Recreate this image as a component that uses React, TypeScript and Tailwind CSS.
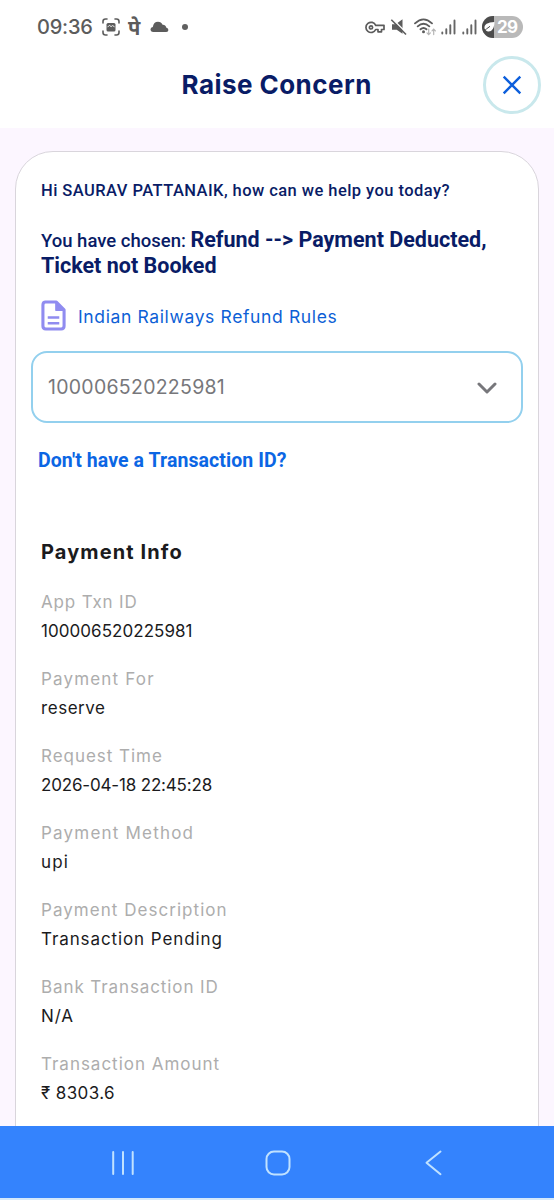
import React from 'react';

interface InfoRow {
  label: string;
  value: string;
  labelClass: string;
  valueClass: string;
}

const PAYMENT_INFO: InfoRow[] = [
  { label: 'App Txn ID', value: '100006520225981', labelClass: 'tracking-[0.84px]', valueClass: 'tracking-[0.05px]' },
  { label: 'Payment For', value: 'reserve', labelClass: 'tracking-[1.17px]', valueClass: 'tracking-[0.55px]' },
  { label: 'Request Time', value: '2026-04-18 22:45:28', labelClass: 'tracking-[0.97px]', valueClass: 'tracking-[-0.17px]' },
  { label: 'Payment Method', value: 'upi', labelClass: 'tracking-[1.2px]', valueClass: 'tracking-[1.2px]' },
  { label: 'Payment Description', value: 'Transaction Pending', labelClass: 'tracking-[1.04px]', valueClass: 'tracking-[0.9px]' },
  { label: 'Bank Transaction ID', value: 'N/A', labelClass: 'tracking-[0.9px]', valueClass: 'tracking-[0.9px]' },
  { label: 'Transaction Amount', value: '₹ 8303.6', labelClass: 'tracking-[0.98px]', valueClass: 'tracking-[0.4px]' },
];

function SignalIcon() {
  return (
    <svg width="15" height="16" viewBox="0 0 15 16" stroke="#666" strokeWidth="1.9" strokeLinecap="round">
      <path d="M1.300 13.500v1M5.300 10.300v4.200M9.300 6.300v8.200M13.500 1.500v13" />
    </svg>
  );
}

function StatusBar() {
  return (
    <div className="flex h-[54px] items-center justify-between pl-[37px] pr-[31px] text-[#5c5c5c]">
      <div className="flex items-center">
        <span className="w-[65px] text-[20px] font-medium leading-none tracking-[-0.2px]">09:36</span>
        <svg width="18" height="18" viewBox="0 0 18 18" fill="none" stroke="currentColor" strokeWidth="1.6" strokeLinecap="round">
          <path d="M1 5V3.5Q1 1 3.5 1H5M13 1h1.5Q17 1 17 3.5V5M17 13v1.500Q17 17 14.500 17H13M5 17H3.500Q1 17 1 14.500V13" />
          <rect x="4.500" y="5" width="9" height="8.500" rx="1.500" fill="currentColor" stroke="none" />
          <path d="M5.800 8.900l1.600-1.600 1.700 1.300 1.500-1 1.600 1" stroke="#fff" strokeWidth="0.9" />
        </svg>
        <span className="ml-[8px] mt-[5px] w-[14px] font-['Noto_Sans_Devanagari','Noto_Sans',sans-serif] text-[20px] font-bold leading-none">पे</span>
        <svg className="ml-2" width="19" height="12" viewBox="0 0 19 12" fill="currentColor">
          <path d="M3.200 11Q.5 10.800.5 8.300.6 6.300 2.800 6 3.600.7 8 .7q3.300 0 4.600 3 2.900-.2 3.600 2.800 2.200.5 2.200 2.500 0 2-2.200 2Z" />
        </svg>
        <span className="ml-[13px] size-[6px] rounded-full bg-[#606060]" />
      </div>
      <div className="flex items-center">
        <svg width="20" height="13" viewBox="0 0 20 13" fill="none" stroke="currentColor" strokeWidth="1.7" strokeLinejoin="round">
          <path d="M10.700 4.300A5.100 5.100 0 1 0 10.700 8.500H13v2.300h3.500V8.500H19V4.300Z" />
          <circle cx="6" cy="6.400" r="1.600" />
        </svg>
        <svg className="ml-[5px]" width="18" height="18" viewBox="0 0 18 18" fill="currentColor">
          <path d="M2 6.300h3.700L12.500 1.200v14.600L6.700 11.800H2Z" />
          <path d="M2.300.8 17 15.500" stroke="#fff" strokeWidth="1.500" />
          <path d="M1.300 1.800 16 16.500" stroke="currentColor" strokeWidth="1.600" />
        </svg>
        <svg className="ml-[6px]" width="23" height="18" viewBox="0 0 23 18" fill="none" stroke="currentColor" strokeWidth="1.800" strokeLinecap="round">
          <path d="M1 5.400Q9.500-2.600 18 5.400M3.700 8.400Q9.500 3 15.300 8.400M6.500 11.300Q9.500 8.700 12.500 11.300" />
          <circle cx="9.500" cy="13.700" r="1.500" fill="currentColor" stroke="none" />
          <path d="M14.700 11v5.500M13 14.900l1.700 1.700 1.700-1.700M19.700 16.600v-5.500M18 12.800l1.700-1.700 1.700 1.700" stroke="#b5b5b5" strokeWidth="1.200" />
        </svg>
        <div className="ml-[4px] flex gap-[6px]">
          <SignalIcon />
          <SignalIcon />
        </div>
        <div className="ml-[5px] flex h-[22px] w-[41px] items-center overflow-hidden rounded-full bg-[#b9b9b9]">
          <div className="flex h-full w-3 shrink-0 items-center bg-[#4c4c4c]">
            <svg className="ml-[1px] shrink-0 overflow-visible" width="12" height="12" viewBox="0 0 12 12" fill="#fff">
              <path d="M1.500 7.500C1 3.500 4.500 1.300 11.500 1c-.2 6.300-2.500 9.700-6.200 9.500q-1.400 0-2.300-.9Z" />
              <path d="M.2 11.200Q3.500 7.500 7 5.300" fill="none" stroke="#4c4c4c" strokeWidth="1" />
            </svg>
          </div>
          <span className="ml-[3px] text-[17px] font-bold leading-none tracking-[-0.6px] text-white">29</span>
        </div>
      </div>
    </div>
  );
}

function Header() {
  return (
    <header className="flex h-[74px] items-start justify-between pl-[13px] pr-[13px]">
      <span className="w-[57px]" />
      <h1 className="mt-[12px] w-[190px] whitespace-nowrap text-[26px] font-bold leading-[38px] tracking-[0.45px] text-[#091c66]">
        Raise Concern
      </h1>
      <button aria-label="Close" className="mt-[2px] flex size-[58px] items-center justify-center rounded-full border-[3px] border-[#c9e8ec]">
        <svg width="20" height="20" viewBox="0 0 20 20" stroke="#0d5fdc" strokeWidth="2.400">
          <path d="M1.700 1.700 18.300 18.300M18.300 1.700 1.700 18.300" />
        </svg>
      </button>
    </header>
  );
}

function PaymentInfo() {
  return (
    <section className="mt-[61px] pl-[10px]">
      <h2 className="text-[20px] font-bold leading-[30px] tracking-[1.1px] text-[#1b1b1d]">Payment Info</h2>
      <dl className="mt-[21px]">
        {PAYMENT_INFO.map((row) => (
          <div key={row.label} className="mb-[19px] whitespace-nowrap text-[17px] leading-[29px]">
            <dt className={`text-[#adadad] ${row.labelClass}`}>{row.label}</dt>
            <dd className={`text-[#1b1b1d] ${row.valueClass}`}>{row.value}</dd>
          </div>
        ))}
      </dl>
    </section>
  );
}

function NavigationBar() {
  return (
    <nav className="h-[74px] shrink-0 border-b-2 border-[#d5e9fb] bg-[#3483fd]">
      <div className="flex h-[72px] items-center justify-between pl-[111px] pr-[112px] pt-[2px]">
        <svg width="24" height="26" viewBox="0 0 24 26" stroke="#c0e2ff" strokeWidth="2" strokeLinecap="round">
          <path d="M2.200 2v22M12 2v22M21.700 2v22" />
        </svg>
        <svg className="mr-[4px]" width="26" height="26" viewBox="0 0 26 26" fill="none" stroke="#c0e2ff" strokeWidth="2">
          <rect x="1.500" y="1.500" width="23" height="23" rx="7.500" />
        </svg>
        <svg width="17" height="26" viewBox="0 0 17 26" fill="none" stroke="#c0e2ff" strokeWidth="2" strokeLinecap="round" strokeLinejoin="round">
          <path d="M15.500 1.500 1.500 12.700l14 11.500" />
        </svg>
      </div>
    </nav>
  );
}

function App() {
  return (
    <div className="flex h-[1200px] w-full flex-col overflow-hidden bg-white font-['Inter',sans-serif]">
      <StatusBar />
      <Header />
      <main className="min-h-0 flex-1 overflow-hidden bg-[#fcf6ff] pl-[15px] pr-[15px] pt-[23px]">
        <div className="h-[1100px] rounded-[38px] border border-[#d9d5dc] bg-white pl-[15px] pr-[15px] pt-[25px]">
          <div className="whitespace-nowrap pl-[10px] font-['Roboto',sans-serif] text-[#091c66]">
            <p className="text-[16.5px] font-medium leading-[28px] tracking-[0.44px]">
              Hi SAURAV PATTANAIK, how can we help you today?
            </p>
            <p className="mt-[23px] text-[18.5px] font-medium leading-[24.5px]">
              You have chosen: <b className="text-[21.500px] font-bold">Refund --&gt; Payment Deducted,</b>
              <br />
              <b className="text-[21.500px] font-bold">Ticket not Booked</b>
            </p>
          </div>
          <a className="mt-[21px] flex h-[34px] items-center pl-[10px]">
            <svg className="mb-[3px]" width="25" height="31" viewBox="0 0 26 32" fill="none" stroke="#908cf0" strokeWidth="3.200" strokeLinejoin="round">
              <path d="M4 2h12l8 8v17q0 3-3 3H5q-3 0-3-3V5q0-3 3-3Z" />
              <path d="M15.500 2v8.500H24Z" fill="#908cf0" strokeWidth="1.500" />
              <path d="M7 18h12M7 24h12" strokeWidth="2.600" />
            </svg>
            <span className="ml-[12px] whitespace-nowrap text-[17.5px] tracking-[0.63px] text-[#0d5fd6]">Indian Railways Refund Rules</span>
          </a>
          <div className="mt-[17px] flex h-[72px] items-center justify-between rounded-[16px] border-2 border-[#93d0ee] pl-[15px] pr-[24px] pt-[2px]">
            <span className="text-[19.500px] tracking-[0.27px] text-[#77777b]">100006520225981</span>
            <svg width="20" height="12" viewBox="0 0 20 12" fill="none" stroke="#77777b" strokeWidth="3" strokeLinecap="round" strokeLinejoin="round">
              <path d="M2 2l8 8 8-8" />
            </svg>
          </div>
          <p className="mt-[23px] whitespace-nowrap pl-[7px] font-['Roboto',sans-serif] text-[19.5px] font-bold leading-[30px] tracking-[0.08px] text-[#0b66e4]">
            Don't have a Transaction ID?
          </p>
          <PaymentInfo />
        </div>
      </main>
      <NavigationBar />
    </div>
  );
}

export default App;
